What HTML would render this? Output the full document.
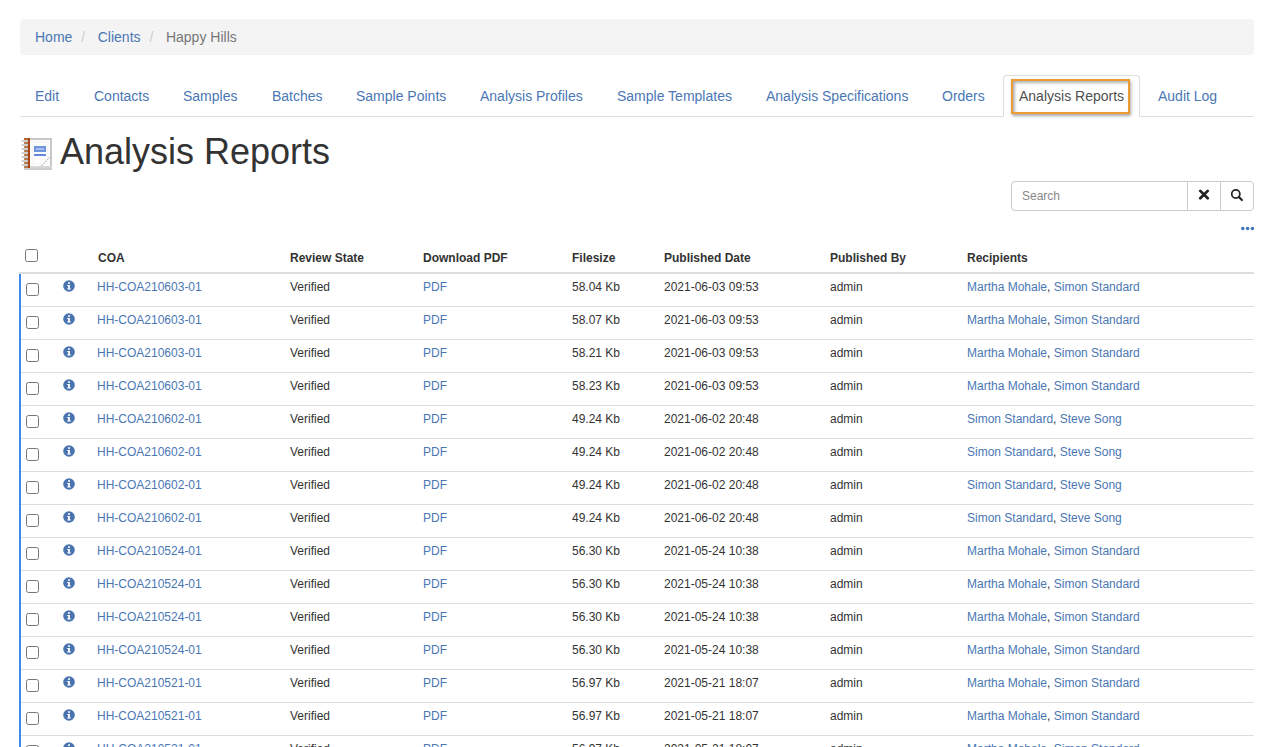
<!DOCTYPE html><html><head><meta charset="utf-8"><style>*{box-sizing:border-box;margin:0;padding:0}
html,body{width:1263px;height:747px;overflow:hidden;background:#fff}
body{font-family:"Liberation Sans",sans-serif;color:#333;position:relative}
a{color:#4a77b4;text-decoration:none}
.bc{position:absolute;left:20px;top:19px;width:1234px;height:36px;background:#f4f4f4;border-radius:4px;font-size:14px;line-height:36px;padding-left:15px;white-space:nowrap}
.bc .sep{color:#ccc;padding:0 12.5px 0 9px}
.bc .cur{color:#777}
.tabs{position:absolute;left:0;top:0;width:1263px;height:117px}
.tabs::after{content:"";position:absolute;left:20px;top:116px;width:1234px;height:1px;background:#ddd}
.tabs a,.tabs .acttxt{position:absolute;top:86px;font-size:14px;line-height:20px;white-space:nowrap}
.tabs .acttxt{color:#505050}
.tabs .active{position:absolute;left:1003px;top:75px;width:137px;height:42px;border:1px solid #ddd;border-bottom-color:#fff;border-radius:4px 4px 0 0;background:#fff;z-index:1}
.tabs .focus{position:absolute;left:1011px;top:79px;width:119px;height:35px;border:2px solid #ee9a32;box-shadow:1px 2px 3px rgba(0,0,0,.35), inset 2px 2px 3px rgba(0,0,0,.3);z-index:2}
.tabs .acttxt{z-index:3}
.ticon{position:absolute;left:18px;top:134px;width:40px;height:40px}
.title{position:absolute;left:60px;top:130px;font-size:36px;font-weight:normal;line-height:44px;color:#333;white-space:nowrap}
.search{position:absolute;left:1011px;top:181px;width:243px;height:30px;border:1px solid #ccc;border-radius:4px}
.search .ph{position:absolute;left:10px;top:7px;font-size:12px;color:#888}
.search .b1{position:absolute;left:175px;top:-1px;width:33px;height:30px;border-left:1px solid #ccc;}
.search .b2{position:absolute;left:208px;top:-1px;width:34px;height:30px;border-left:1px solid #ccc;}
.dots{position:absolute;left:1241px;top:226px;width:14px;height:5px}

.thead .th{position:absolute;top:251px;font-size:12px;font-weight:bold;line-height:15px;white-space:nowrap;color:#333}
.cb{position:absolute;width:13px;height:13px;border:1px solid #767676;border-radius:2.5px;background:#fff}
.hline{position:absolute;left:19px;top:272px;width:1235px;height:2px;background:#ddd}
.row{position:absolute;left:19px;width:1235px;height:33px;border-bottom:1px solid #ddd;margin-left:2px;width:1233px}
.bluel{position:absolute;left:19px;top:274px;width:2px;height:480px;background:#3b8ae8}
.row .cb{left:5px !important;margin-left:0}
.row .td{position:absolute;top:6px;font-size:12px;line-height:15px;white-space:nowrap}
.row .td{margin-left:-21px}
.row .ic{position:absolute;left:42px;top:6px;width:12px;height:12px}
svg{display:block}
</style></head><body><div class="bc"><a>Home</a><span class="sep">/</span><a>Clients</a><span class="sep">/</span><span class="cur">Happy Hills</span></div>
<div class="tabs">
<a style="left:35px">Edit</a>
<a style="left:94px">Contacts</a>
<a style="left:183px">Samples</a>
<a style="left:272px">Batches</a>
<a style="left:356px">Sample Points</a>
<a style="left:480px">Analysis Profiles</a>
<a style="left:617px">Sample Templates</a>
<a style="left:766px">Analysis Specifications</a>
<a style="left:942px">Orders</a>
<div class="active"></div>
<div class="focus"></div>
<span class="acttxt" style="left:1019px">Analysis Reports</span>
<a style="left:1158px">Audit Log</a>
</div>
<div class="ticon"><svg width="40" height="40" viewBox="0 0 40 40" shape-rendering="crispEdges">
<defs><linearGradient id="bg" x1="0" y1="0" x2="0" y2="1"><stop offset="0" stop-color="#dcdcdc"/><stop offset="1" stop-color="#c8c8c8"/></linearGradient>
<linearGradient id="sp" x1="0" y1="0" x2="1" y2="0"><stop offset="0" stop-color="#b8895e"/><stop offset="1" stop-color="#b0602c"/></linearGradient></defs>
<rect x="12" y="4" width="22" height="31" fill="#c8c8c8"/>
<rect x="12" y="6" width="20" height="26" fill="#fbfbfb"/>
<rect x="14" y="8" width="16" height="22" fill="#f5f5f5"/>
<rect x="15" y="9" width="14" height="20" fill="#fdfdfd"/>
<rect x="6" y="32" width="28" height="4" fill="url(#bg)"/>
<rect x="6" y="4" width="6" height="30" fill="url(#sp)"/>
<rect x="10" y="4" width="2" height="30" fill="#a4481a"/>
<rect x="6" y="4" width="4" height="2" fill="#b8652e"/>
<g fill="#d0d0d0">
<rect x="4" y="6" width="6" height="2"/><rect x="4" y="10" width="6" height="2"/><rect x="4" y="14" width="6" height="2"/><rect x="4" y="18" width="6" height="2"/><rect x="4" y="22" width="6" height="2"/><rect x="4" y="26" width="6" height="2"/><rect x="4" y="30" width="6" height="2"/>
</g>
<g fill="#eeeeee">
<rect x="3" y="6" width="1" height="2"/><rect x="3" y="10" width="1" height="2"/><rect x="3" y="14" width="1" height="2"/><rect x="3" y="18" width="1" height="2"/><rect x="3" y="22" width="1" height="2"/><rect x="3" y="26" width="1" height="2"/><rect x="3" y="30" width="1" height="2"/>
</g>
<rect x="16" y="12" width="12" height="6" fill="#6d94dc"/>
<rect x="18" y="14" width="8" height="2" fill="#a9c0ec"/>
<rect x="16" y="20" width="12" height="2" fill="#628ad9"/>
<g fill="#b8b8b8"><rect x="23" y="31" width="1" height="1"/><rect x="25" y="29" width="1" height="1"/><rect x="27" y="27" width="1" height="1"/><rect x="29" y="25" width="1" height="1"/><rect x="31" y="23" width="1" height="1"/></g>
<g fill="#e2e2e2"><rect x="24" y="30" width="1" height="1"/><rect x="26" y="28" width="1" height="1"/><rect x="28" y="26" width="1" height="1"/><rect x="30" y="24" width="1" height="1"/><rect x="24" y="31" width="1" height="1"/><rect x="26" y="29" width="1" height="1"/><rect x="28" y="27" width="1" height="1"/><rect x="30" y="25" width="1" height="1"/></g>
</svg>
</div>
<h1 class="title">Analysis Reports</h1>
<div class="search"><span class="ph">Search</span><div class="b1"><svg style="position:absolute;left:10px;top:8px" width="12" height="12" viewBox="0 0 12 12"><path d="M2.3 1.9L9.7 9.3M9.7 1.9L2.3 9.3" stroke="#222" stroke-width="2.7" stroke-linecap="round"/></svg></div><div class="b2"><svg style="position:absolute;left:7px;top:5px" width="18" height="18" viewBox="0 0 18 18"><circle cx="7.8" cy="8" r="4.05" fill="none" stroke="#222" stroke-width="1.7"/><path d="M10.9 11.1L13.9 14.1" stroke="#222" stroke-width="2.1" stroke-linecap="round"/></svg></div></div>
<div class="dots"><svg width="14" height="5" viewBox="0 0 14 5"><g fill="#3f74c0"><circle cx="1.8" cy="2.4" r="1.75"/><circle cx="6.6" cy="2.4" r="1.75"/><circle cx="11.4" cy="2.4" r="1.75"/></g></svg></div>

<div class="thead"><span class="cb" style="left:25px;top:249px"></span>
<span class="th" style="left:98px">COA</span>
<span class="th" style="left:290px">Review State</span>
<span class="th" style="left:423px">Download PDF</span>
<span class="th" style="left:572px">Filesize</span>
<span class="th" style="left:664px">Published Date</span>
<span class="th" style="left:830px">Published By</span>
<span class="th" style="left:967px">Recipients</span>
</div><div class="hline"></div><div class="bluel"></div>
<div class="row" style="top:274px">
<span class="cb" style="left:26px;top:9px"></span>
<span class="ic"><svg width="12" height="12" viewBox="0 0 12 12"><circle cx="6" cy="6" r="5.8" fill="#4a74b0"/><rect x="5.1" y="2.2" width="1.8" height="1.7" fill="#fff"/><path d="M4.2 4.9h2.7v3.5h0.9v1.2h-3.6v-1.2h0.9v-2.3h-0.9z" fill="#fff"/></svg></span>
<a class="td" style="left:97px">HH-COA210603-01</a>
<span class="td" style="left:290px">Verified</span>
<a class="td" style="left:423px">PDF</a>
<span class="td" style="left:572px">58.04 Kb</span>
<span class="td" style="left:664px">2021-06-03 09:53</span>
<span class="td" style="left:830px">admin</span>
<span class="td" style="left:967px"><a>Martha Mohale</a>, <a>Simon Standard</a></span>
</div>
<div class="row" style="top:307px">
<span class="cb" style="left:26px;top:9px"></span>
<span class="ic"><svg width="12" height="12" viewBox="0 0 12 12"><circle cx="6" cy="6" r="5.8" fill="#4a74b0"/><rect x="5.1" y="2.2" width="1.8" height="1.7" fill="#fff"/><path d="M4.2 4.9h2.7v3.5h0.9v1.2h-3.6v-1.2h0.9v-2.3h-0.9z" fill="#fff"/></svg></span>
<a class="td" style="left:97px">HH-COA210603-01</a>
<span class="td" style="left:290px">Verified</span>
<a class="td" style="left:423px">PDF</a>
<span class="td" style="left:572px">58.07 Kb</span>
<span class="td" style="left:664px">2021-06-03 09:53</span>
<span class="td" style="left:830px">admin</span>
<span class="td" style="left:967px"><a>Martha Mohale</a>, <a>Simon Standard</a></span>
</div>
<div class="row" style="top:340px">
<span class="cb" style="left:26px;top:9px"></span>
<span class="ic"><svg width="12" height="12" viewBox="0 0 12 12"><circle cx="6" cy="6" r="5.8" fill="#4a74b0"/><rect x="5.1" y="2.2" width="1.8" height="1.7" fill="#fff"/><path d="M4.2 4.9h2.7v3.5h0.9v1.2h-3.6v-1.2h0.9v-2.3h-0.9z" fill="#fff"/></svg></span>
<a class="td" style="left:97px">HH-COA210603-01</a>
<span class="td" style="left:290px">Verified</span>
<a class="td" style="left:423px">PDF</a>
<span class="td" style="left:572px">58.21 Kb</span>
<span class="td" style="left:664px">2021-06-03 09:53</span>
<span class="td" style="left:830px">admin</span>
<span class="td" style="left:967px"><a>Martha Mohale</a>, <a>Simon Standard</a></span>
</div>
<div class="row" style="top:373px">
<span class="cb" style="left:26px;top:9px"></span>
<span class="ic"><svg width="12" height="12" viewBox="0 0 12 12"><circle cx="6" cy="6" r="5.8" fill="#4a74b0"/><rect x="5.1" y="2.2" width="1.8" height="1.7" fill="#fff"/><path d="M4.2 4.9h2.7v3.5h0.9v1.2h-3.6v-1.2h0.9v-2.3h-0.9z" fill="#fff"/></svg></span>
<a class="td" style="left:97px">HH-COA210603-01</a>
<span class="td" style="left:290px">Verified</span>
<a class="td" style="left:423px">PDF</a>
<span class="td" style="left:572px">58.23 Kb</span>
<span class="td" style="left:664px">2021-06-03 09:53</span>
<span class="td" style="left:830px">admin</span>
<span class="td" style="left:967px"><a>Martha Mohale</a>, <a>Simon Standard</a></span>
</div>
<div class="row" style="top:406px">
<span class="cb" style="left:26px;top:9px"></span>
<span class="ic"><svg width="12" height="12" viewBox="0 0 12 12"><circle cx="6" cy="6" r="5.8" fill="#4a74b0"/><rect x="5.1" y="2.2" width="1.8" height="1.7" fill="#fff"/><path d="M4.2 4.9h2.7v3.5h0.9v1.2h-3.6v-1.2h0.9v-2.3h-0.9z" fill="#fff"/></svg></span>
<a class="td" style="left:97px">HH-COA210602-01</a>
<span class="td" style="left:290px">Verified</span>
<a class="td" style="left:423px">PDF</a>
<span class="td" style="left:572px">49.24 Kb</span>
<span class="td" style="left:664px">2021-06-02 20:48</span>
<span class="td" style="left:830px">admin</span>
<span class="td" style="left:967px"><a>Simon Standard</a>, <a>Steve Song</a></span>
</div>
<div class="row" style="top:439px">
<span class="cb" style="left:26px;top:9px"></span>
<span class="ic"><svg width="12" height="12" viewBox="0 0 12 12"><circle cx="6" cy="6" r="5.8" fill="#4a74b0"/><rect x="5.1" y="2.2" width="1.8" height="1.7" fill="#fff"/><path d="M4.2 4.9h2.7v3.5h0.9v1.2h-3.6v-1.2h0.9v-2.3h-0.9z" fill="#fff"/></svg></span>
<a class="td" style="left:97px">HH-COA210602-01</a>
<span class="td" style="left:290px">Verified</span>
<a class="td" style="left:423px">PDF</a>
<span class="td" style="left:572px">49.24 Kb</span>
<span class="td" style="left:664px">2021-06-02 20:48</span>
<span class="td" style="left:830px">admin</span>
<span class="td" style="left:967px"><a>Simon Standard</a>, <a>Steve Song</a></span>
</div>
<div class="row" style="top:472px">
<span class="cb" style="left:26px;top:9px"></span>
<span class="ic"><svg width="12" height="12" viewBox="0 0 12 12"><circle cx="6" cy="6" r="5.8" fill="#4a74b0"/><rect x="5.1" y="2.2" width="1.8" height="1.7" fill="#fff"/><path d="M4.2 4.9h2.7v3.5h0.9v1.2h-3.6v-1.2h0.9v-2.3h-0.9z" fill="#fff"/></svg></span>
<a class="td" style="left:97px">HH-COA210602-01</a>
<span class="td" style="left:290px">Verified</span>
<a class="td" style="left:423px">PDF</a>
<span class="td" style="left:572px">49.24 Kb</span>
<span class="td" style="left:664px">2021-06-02 20:48</span>
<span class="td" style="left:830px">admin</span>
<span class="td" style="left:967px"><a>Simon Standard</a>, <a>Steve Song</a></span>
</div>
<div class="row" style="top:505px">
<span class="cb" style="left:26px;top:9px"></span>
<span class="ic"><svg width="12" height="12" viewBox="0 0 12 12"><circle cx="6" cy="6" r="5.8" fill="#4a74b0"/><rect x="5.1" y="2.2" width="1.8" height="1.7" fill="#fff"/><path d="M4.2 4.9h2.7v3.5h0.9v1.2h-3.6v-1.2h0.9v-2.3h-0.9z" fill="#fff"/></svg></span>
<a class="td" style="left:97px">HH-COA210602-01</a>
<span class="td" style="left:290px">Verified</span>
<a class="td" style="left:423px">PDF</a>
<span class="td" style="left:572px">49.24 Kb</span>
<span class="td" style="left:664px">2021-06-02 20:48</span>
<span class="td" style="left:830px">admin</span>
<span class="td" style="left:967px"><a>Simon Standard</a>, <a>Steve Song</a></span>
</div>
<div class="row" style="top:538px">
<span class="cb" style="left:26px;top:9px"></span>
<span class="ic"><svg width="12" height="12" viewBox="0 0 12 12"><circle cx="6" cy="6" r="5.8" fill="#4a74b0"/><rect x="5.1" y="2.2" width="1.8" height="1.7" fill="#fff"/><path d="M4.2 4.9h2.7v3.5h0.9v1.2h-3.6v-1.2h0.9v-2.3h-0.9z" fill="#fff"/></svg></span>
<a class="td" style="left:97px">HH-COA210524-01</a>
<span class="td" style="left:290px">Verified</span>
<a class="td" style="left:423px">PDF</a>
<span class="td" style="left:572px">56.30 Kb</span>
<span class="td" style="left:664px">2021-05-24 10:38</span>
<span class="td" style="left:830px">admin</span>
<span class="td" style="left:967px"><a>Martha Mohale</a>, <a>Simon Standard</a></span>
</div>
<div class="row" style="top:571px">
<span class="cb" style="left:26px;top:9px"></span>
<span class="ic"><svg width="12" height="12" viewBox="0 0 12 12"><circle cx="6" cy="6" r="5.8" fill="#4a74b0"/><rect x="5.1" y="2.2" width="1.8" height="1.7" fill="#fff"/><path d="M4.2 4.9h2.7v3.5h0.9v1.2h-3.6v-1.2h0.9v-2.3h-0.9z" fill="#fff"/></svg></span>
<a class="td" style="left:97px">HH-COA210524-01</a>
<span class="td" style="left:290px">Verified</span>
<a class="td" style="left:423px">PDF</a>
<span class="td" style="left:572px">56.30 Kb</span>
<span class="td" style="left:664px">2021-05-24 10:38</span>
<span class="td" style="left:830px">admin</span>
<span class="td" style="left:967px"><a>Martha Mohale</a>, <a>Simon Standard</a></span>
</div>
<div class="row" style="top:604px">
<span class="cb" style="left:26px;top:9px"></span>
<span class="ic"><svg width="12" height="12" viewBox="0 0 12 12"><circle cx="6" cy="6" r="5.8" fill="#4a74b0"/><rect x="5.1" y="2.2" width="1.8" height="1.7" fill="#fff"/><path d="M4.2 4.9h2.7v3.5h0.9v1.2h-3.6v-1.2h0.9v-2.3h-0.9z" fill="#fff"/></svg></span>
<a class="td" style="left:97px">HH-COA210524-01</a>
<span class="td" style="left:290px">Verified</span>
<a class="td" style="left:423px">PDF</a>
<span class="td" style="left:572px">56.30 Kb</span>
<span class="td" style="left:664px">2021-05-24 10:38</span>
<span class="td" style="left:830px">admin</span>
<span class="td" style="left:967px"><a>Martha Mohale</a>, <a>Simon Standard</a></span>
</div>
<div class="row" style="top:637px">
<span class="cb" style="left:26px;top:9px"></span>
<span class="ic"><svg width="12" height="12" viewBox="0 0 12 12"><circle cx="6" cy="6" r="5.8" fill="#4a74b0"/><rect x="5.1" y="2.2" width="1.8" height="1.7" fill="#fff"/><path d="M4.2 4.9h2.7v3.5h0.9v1.2h-3.6v-1.2h0.9v-2.3h-0.9z" fill="#fff"/></svg></span>
<a class="td" style="left:97px">HH-COA210524-01</a>
<span class="td" style="left:290px">Verified</span>
<a class="td" style="left:423px">PDF</a>
<span class="td" style="left:572px">56.30 Kb</span>
<span class="td" style="left:664px">2021-05-24 10:38</span>
<span class="td" style="left:830px">admin</span>
<span class="td" style="left:967px"><a>Martha Mohale</a>, <a>Simon Standard</a></span>
</div>
<div class="row" style="top:670px">
<span class="cb" style="left:26px;top:9px"></span>
<span class="ic"><svg width="12" height="12" viewBox="0 0 12 12"><circle cx="6" cy="6" r="5.8" fill="#4a74b0"/><rect x="5.1" y="2.2" width="1.8" height="1.7" fill="#fff"/><path d="M4.2 4.9h2.7v3.5h0.9v1.2h-3.6v-1.2h0.9v-2.3h-0.9z" fill="#fff"/></svg></span>
<a class="td" style="left:97px">HH-COA210521-01</a>
<span class="td" style="left:290px">Verified</span>
<a class="td" style="left:423px">PDF</a>
<span class="td" style="left:572px">56.97 Kb</span>
<span class="td" style="left:664px">2021-05-21 18:07</span>
<span class="td" style="left:830px">admin</span>
<span class="td" style="left:967px"><a>Martha Mohale</a>, <a>Simon Standard</a></span>
</div>
<div class="row" style="top:703px">
<span class="cb" style="left:26px;top:9px"></span>
<span class="ic"><svg width="12" height="12" viewBox="0 0 12 12"><circle cx="6" cy="6" r="5.8" fill="#4a74b0"/><rect x="5.1" y="2.2" width="1.8" height="1.7" fill="#fff"/><path d="M4.2 4.9h2.7v3.5h0.9v1.2h-3.6v-1.2h0.9v-2.3h-0.9z" fill="#fff"/></svg></span>
<a class="td" style="left:97px">HH-COA210521-01</a>
<span class="td" style="left:290px">Verified</span>
<a class="td" style="left:423px">PDF</a>
<span class="td" style="left:572px">56.97 Kb</span>
<span class="td" style="left:664px">2021-05-21 18:07</span>
<span class="td" style="left:830px">admin</span>
<span class="td" style="left:967px"><a>Martha Mohale</a>, <a>Simon Standard</a></span>
</div>
<div class="row" style="top:736px">
<span class="cb" style="left:26px;top:9px"></span>
<span class="ic"><svg width="12" height="12" viewBox="0 0 12 12"><circle cx="6" cy="6" r="5.8" fill="#4a74b0"/><rect x="5.1" y="2.2" width="1.8" height="1.7" fill="#fff"/><path d="M4.2 4.9h2.7v3.5h0.9v1.2h-3.6v-1.2h0.9v-2.3h-0.9z" fill="#fff"/></svg></span>
<a class="td" style="left:97px">HH-COA210521-01</a>
<span class="td" style="left:290px">Verified</span>
<a class="td" style="left:423px">PDF</a>
<span class="td" style="left:572px">56.97 Kb</span>
<span class="td" style="left:664px">2021-05-21 18:07</span>
<span class="td" style="left:830px">admin</span>
<span class="td" style="left:967px"><a>Martha Mohale</a>, <a>Simon Standard</a></span>
</div></body></html>
